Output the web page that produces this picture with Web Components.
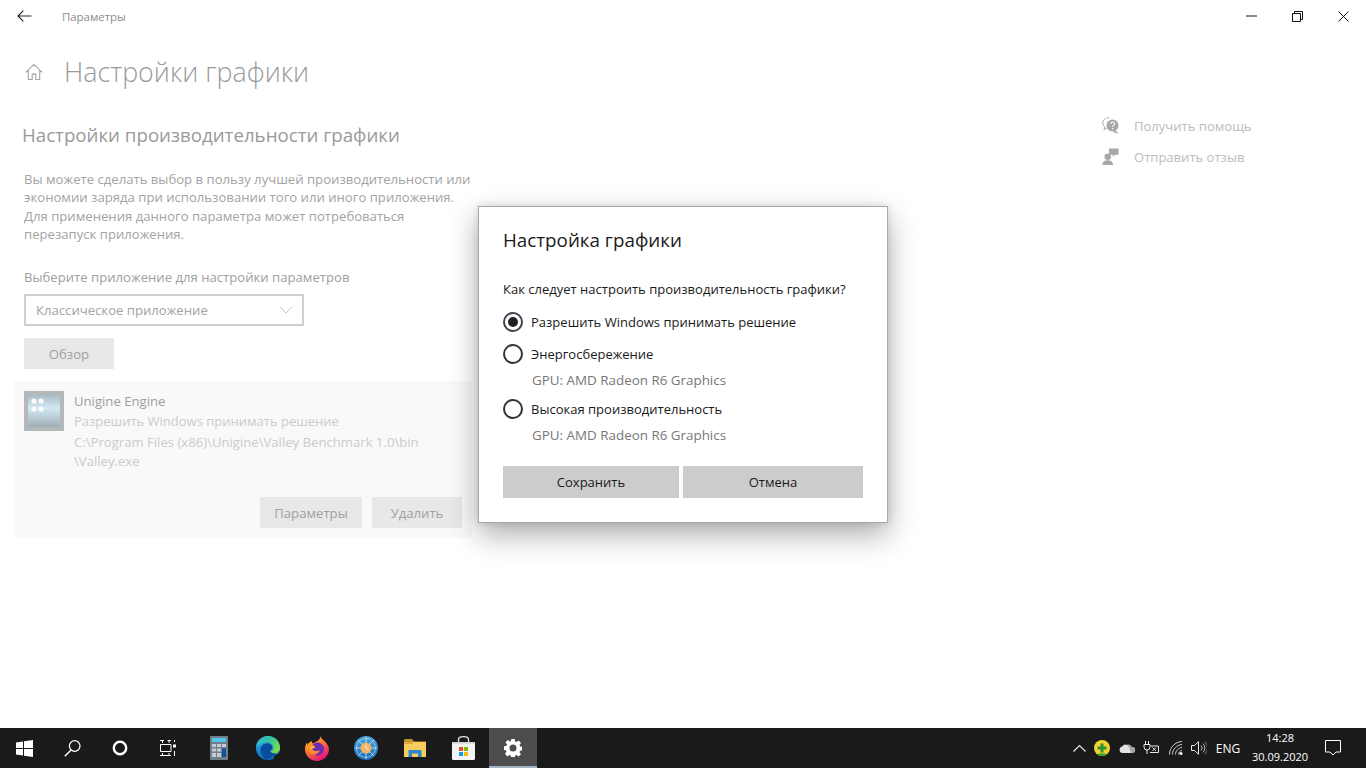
<!DOCTYPE html>
<html lang="ru">
<head>
<meta charset="utf-8">
<title>Настройки графики</title>
<style>
html, body { margin: 0; height: 100%; }
body {
    width: 1366px; height: 768px; overflow: hidden; background: #fff;
    font-family: "Open Sans", "Noto Sans", sans-serif; font-size: 13.13px;
    display: flex; flex-direction: column; position: relative;
}
settings-window { flex: 1; }
</style>
</head>
<body>
<settings-window>
    <graphics-page></graphics-page>
    <help-links slot="side"></help-links>
</settings-window>
<task-bar></task-bar>
<graphics-dialog>
    <radio-option checked label="Разрешить Windows принимать решение"></radio-option>
    <radio-option label="Энергосбережение" sub="GPU: AMD Radeon R6 Graphics"></radio-option>
    <radio-option label="Высокая производительность" sub="GPU: AMD Radeon R6 Graphics"></radio-option>
</graphics-dialog>

<script>
class SettingsWindow extends HTMLElement {
    constructor() {
        super()
        this.attachShadow({mode: "open"})
        this.shadowRoot.innerHTML = `
        <style>
        :host { display: flex; flex-direction: column; min-height: 0; }
        .title { height: 32px; display: flex; align-items: center; color: #8c8c8c; font-size: 11.4px; }
        .back { width: 62px; display: flex; padding-left: 17px; box-sizing: border-box; }
        .name { flex: 1; }
        .ctl { width: 46px; height: 32px; display: flex; align-items: center; justify-content: center; }
        svg { display: block; }
        .body { flex: 1; display: flex; justify-content: space-between; }
        </style>
        <div class="title">
            <div class="back"><svg width="15" height="12" viewBox="0 0 15 12" fill="none" stroke="#222" stroke-width="1.1"><path d="M14.5 6H1M6.3.7 1 6l5.3 5.3"/></svg></div>
            <div class="name">Параметры</div>
            <div class="ctl"><svg width="11" height="2" viewBox="0 0 11 2"><path d="M0 1h11" stroke="#111" stroke-width="1"/></svg></div>
            <div class="ctl"><svg width="11" height="11" viewBox="0 0 11 11" fill="none" stroke="#111"><path d="M.5 2.500h8v8h-8zM2.500 2.500v-2h8v8h-2"/></svg></div>
            <div class="ctl"><svg width="11" height="11" viewBox="0 0 11 11" fill="none" stroke="#111"><path d="m.5.5 10 10M10.500.5l-10 10"/></svg></div>
        </div>
        <div class="body"><slot></slot><slot name="side"></slot></div>`
    }
}

class GraphicsPage extends HTMLElement {
    constructor() {
        super()
        this.attachShadow({mode: "open"})
        this.shadowRoot.innerHTML = `
        <style>
        :host { display: block; width: 472px; padding-left: 14px; color: #a3a3a3; }
        .head { display: flex; align-items: center; height: 42px; margin-top: 18px; padding-left: 11px; }
        .head svg { display: block; margin-right: 21px; margin-top: 2px; }
        h1 { margin: 0; font-weight: 300; font-size: 26.8px; color: #9a9a9a; white-space: nowrap; }
        h2 { margin: 29px 0 0 8px; font-weight: 400; font-size: 18.7px; line-height: 28px; color: #9a9a9a; white-space: nowrap; }
        p { margin: 21px 0 0 10px; line-height: 18.3px; white-space: nowrap; }
        .lab { margin: 25px 0 0 10px; line-height: 18px; color: #a0a0a0; white-space: nowrap; }
        .sel {
            margin: 8px 0 0 10px; width: 280px; height: 32px; box-sizing: border-box; border: 2px solid #d0d0d0;
            display: flex; align-items: center; justify-content: space-between; padding: 0 9px 0 10px; color: #a3a3a3;
        }
        flat-button { margin: 12px 0 0 10px; }
        app-card { margin-top: 12px; }
        </style>
        <div class="head">
            <svg width="18" height="18" viewBox="0 0 18 18" fill="none" stroke="#a3a3a3" stroke-width="1.1"><path d="M.8 9.400 9 1.400l8.200 8M3.300 7.400v9.100h3.900v-5.400h3.600v5.400h3.900V7.400"/></svg>
            <h1>Настройки графики</h1>
        </div>
        <h2>Настройки производительности графики</h2>
        <p>Вы можете сделать выбор в пользу лучшей производительности или<br>экономии заряда при использовании того или иного приложения.<br>Для применения данного параметра может потребоваться<br>перезапуск приложения.</p>
        <div class="lab">Выберите приложение для настройки параметров</div>
        <div class="sel"><span>Классическое приложение</span><svg width="14" height="8" viewBox="0 0 14 8" fill="none" stroke="#c4c4c4"><path d="m.5.5 6.500 6.500L13.500.5"/></svg></div>
        <flat-button w="90">Обзор</flat-button>
        <app-card></app-card>`
    }
}

class FlatButton extends HTMLElement {
    constructor() {
        super()
        this.attachShadow({mode: "open"})
        const w = this.getAttribute("w") || "90"
        this.shadowRoot.innerHTML = `
        <style>
        :host { display: block; width: ${w}px; height: 31px; background: #e8e8e8; color: #a0a0a0; text-align: center; line-height: 32px; flex: none; }
        </style>
        <slot></slot>`
    }
}

class AppCard extends HTMLElement {
    constructor() {
        super()
        this.attachShadow({mode: "open"})
        this.shadowRoot.innerHTML = `
        <style>
        :host { display: block; width: 458px; height: 157px; box-sizing: border-box; background: #f9f9f9; padding: 10px; }
        .top { display: flex; gap: 10px; height: 106px; }
        .pic { width: 40px; height: 40px; flex: none; }
        .l { white-space: nowrap; line-height: 18.5px; }
        .a { color: #9d9d9d; margin-top: 1px; }
        .b { color: #cbcbcb; margin-top: 1px; font-size: 13px; }
        .c { color: #cbcbcb; margin-top: 3px; }
        .btns { display: flex; justify-content: flex-end; gap: 10px; }
        </style>
        <div class="top">
            <svg class="pic" viewBox="0 0 40 40">
                <defs><linearGradient id="g" x1="0" y1="0" x2="0" y2="1"><stop offset="0" stop-color="#a9bcc6"/><stop offset=".4" stop-color="#d3e8f2"/><stop offset=".75" stop-color="#b6c9d2"/><stop offset="1" stop-color="#9cabb1"/></linearGradient></defs>
                <rect width="40" height="40" fill="#b4b8ba"/><rect x="4" y="4" width="32" height="32" fill="url(#g)"/>
                <g fill="#fbfbfb"><circle cx="10" cy="10" r="2.600"/><circle cx="17" cy="10" r="2.600"/><circle cx="10" cy="18" r="2.600"/><circle cx="17" cy="18" r="2.600"/></g>
            </svg>
            <div>
                <div class="l a">Unigine Engine</div>
                <div class="l b">Разрешить Windows принимать решение</div>
                <div class="l c">C:\\Program Files (x86)\\Unigine\\Valley Benchmark 1.0\\bin<br>\\Valley.exe</div>
            </div>
        </div>
        <div class="btns"><flat-button w="102">Параметры</flat-button><flat-button w="90">Удалить</flat-button></div>`
    }
}

class HelpLinks extends HTMLElement {
    constructor() {
        super()
        this.attachShadow({mode: "open"})
        this.shadowRoot.innerHTML = `
        <style>
        :host { display: flex; flex-direction: column; gap: 12px; width: 264px; padding-top: 84px; color: #bcbcbc; font-size: 13.05px; }
        .r { display: flex; align-items: center; gap: 15px; height: 19px; white-space: nowrap; }
        svg { display: block; flex: none; }
        </style>
        <div class="r"><svg width="17" height="17" viewBox="0 0 17 17"><path d="M7 .8C3.400.8.700 3 .7 6c0 1.600.8 3 2.100 3.900L2 12.600l2.700-1.600" fill="none" stroke="#aaa"/><circle cx="10.500" cy="8.500" r="6" fill="#a8a8a8"/><path d="m13 13 3.500 3.500-5-1z" fill="#a8a8a8"/><path d="M8.700 7a1.900 1.900 0 1 1 2.600 1.700c-.6.3-.8.6-.8 1.100" fill="none" stroke="#fff" stroke-width="1.100"/><circle cx="10.500" cy="11.500" r=".7" fill="#fff"/></svg><span>Получить помощь</span></div>
        <div class="r"><svg width="17" height="17" viewBox="0 0 17 17" fill="#a8a8a8"><circle cx="5.700" cy="8.800" r="3.300"/><path d="M.4 17c0-3.300 2.100-4.800 5.300-4.800S11 13.700 11 17z"/><path d="M7 .6h9.600v6.200h-3.500l-2.300 1.900V6.800H7z"/></svg><span>Отправить отзыв</span></div>`
    }
}

class RadioOption extends HTMLElement {
    constructor() {
        super()
        this.attachShadow({mode: "open"})
        const checked = this.hasAttribute("checked")
        const sub = this.getAttribute("sub")
        this.shadowRoot.innerHTML = `
        <style>
        :host { display: block; color: #1a1a1a; }
        .r { display: flex; align-items: center; gap: 8px; height: 20px; white-space: nowrap; }
        .o { width: 20px; height: 20px; box-sizing: border-box; border: 2px solid #333; border-radius: 50%; display: flex; align-items: center; justify-content: center; flex: none; }
        .o.on { border-color: #3c4650; }
        .o.on::after { content: ""; width: 10px; height: 10px; border-radius: 50%; background: #222; }
        .s { margin: 7px 0 0 29px; line-height: 18px; color: #777; white-space: nowrap; font-size: 13.4px; }
        </style>
        <div class="r"><span class="o ${checked ? "on" : ""}"></span><span>${this.getAttribute("label")}</span></div>
        ${sub ? `<div class="s">${sub}</div>` : ""}`
    }
}

class GraphicsDialog extends HTMLElement {
    constructor() {
        super()
        this.attachShadow({mode: "open"})
        this.shadowRoot.innerHTML = `
        <style>
        :host {
            position: absolute; left: 478px; top: 206px; width: 410px; height: 317px; box-sizing: border-box;
            background: #fff; border: 1px solid #a8a8a8; box-shadow: 0 12px 28px rgba(0,0,0,.32), 0 0 8px rgba(0,0,0,.12);
            padding: 20px 24px 0; color: #1a1a1a; font-size: 13.03px;
        }
        h3 { margin: 0; font-weight: 400; font-size: 18.8px; line-height: 26px; white-space: nowrap; }
        .q { margin: 27px 0 0; line-height: 18px; white-space: nowrap; }
        .opts { display: flex; flex-direction: column; gap: 10px; margin-top: 14px; }
        ::slotted(radio-option:nth-child(2)) { margin-top: 2px; }
        .btns { display: flex; gap: 4px; margin-top: 22px; }
        .btn { height: 32px; line-height: 32px; text-align: center; background: #ccc; color: #1a1a1a; }
        </style>
        <h3>Настройка графики</h3>
        <div class="q">Как следует настроить производительность графики?</div>
        <div class="opts"><slot></slot></div>
        <div class="btns"><div class="btn" style="width:176px">Сохранить</div><div class="btn" style="width:180px">Отмена</div></div>`
    }
}

class TaskBar extends HTMLElement {
    constructor() {
        super()
        this.attachShadow({mode: "open"})
        this.shadowRoot.innerHTML = `
        <style>
        :host { display: flex; height: 40px; flex: none; background: #1a1a1a; color: #fff; font-size: 12px; }
        .i { height: 40px; display: flex; align-items: center; justify-content: center; flex: none; }
        .s { width: 48px; }
        .a { width: 49px; }
        .gap { width: 2px; }
        .on { background: #4d4d4d; box-shadow: inset 0 -2px 0 #a3b5c4; width: 48px; margin-left: 1px; }
        .sp { flex: 1; }
        .t { height: 40px; display: flex; align-items: center; justify-content: center; flex: none; }
        .clock { width: 72px; text-align: center; line-height: 19px; font-size: 11px; display: block; box-sizing: border-box; }
        svg { display: block; }
        </style>
        <div class="i s"><svg width="17" height="17" viewBox="0 0 17 17" fill="#fff"><path d="M0 2.500 7 1.500v6.500H0zM8 1.300 17 0v8H8zM0 9h7v6.500L0 14.500zM8 9h9v8L8 15.700z"/></svg></div>
        <div class="i s"><svg width="17" height="17" viewBox="0 0 17 17" fill="none" stroke="#fff" stroke-width="1.200"><circle cx="10.700" cy="6" r="5.300"/><path d="M7 10 .8 16.200" stroke-width="1.500"/></svg></div>
        <div class="i s"><svg width="16" height="16" viewBox="0 0 16 16" fill="none" stroke="#fff" stroke-width="2.400"><circle cx="8" cy="8" r="6.200"/></svg></div>
        <div class="i s"><svg width="16" height="16" viewBox="0 0 16 16" fill="none" stroke="#fff"><path d="M.5 4.500h10.500v7H.5zM0 .5h4M7.500.5H11M0 15.500h11M2.500 0v3M9 0v3M2.500 13v3M9 13v3M14.500 0v2M14.500 11v5" /><rect x="13" y="4.500" width="3" height="3" fill="#fff" stroke="none"/></svg></div>
        <div class="gap"></div>
        <div class="i a"><svg width="18" height="24" viewBox="0 0 18 24"><rect width="18" height="24" rx="1" fill="#6f7f8c"/><rect x="2" y="2" width="14" height="4" fill="#53c5ea"/><g fill="#c3ccd2"><rect x="2" y="8" width="4" height="3"/><rect x="7" y="8" width="4" height="3"/><rect x="12" y="8" width="4" height="3"/><rect x="2" y="12.500" width="4" height="3"/><rect x="7" y="12.500" width="4" height="3"/><rect x="2" y="17" width="4" height="4"/><rect x="7" y="17" width="4" height="4"/></g><rect x="12" y="12.500" width="4" height="8.500" fill="#164f97"/></svg></div>
        <div class="i a"><svg width="24" height="24" viewBox="0 0 24 24"><defs><linearGradient id="e1" x1="0" y1="0" x2="0" y2="1"><stop offset="0" stop-color="#2fb6e6"/><stop offset="1" stop-color="#0c6fc0"/></linearGradient><linearGradient id="e2" x1="0" y1="0" x2="1" y2=".6"><stop offset="0" stop-color="#2cb4dc"/><stop offset=".55" stop-color="#35c59a"/><stop offset="1" stop-color="#7ddc4a"/></linearGradient></defs><circle cx="12" cy="12" r="12" fill="url(#e1)"/><path d="M12 0C18.600 0 24 5 24 12c0 3.500-3 5.500-6 5.500-2 0-3.500-1-3.500-2 1.500-.5 3-1.700 3-3.500 0-3.500-3.500-6-6.500-6C6.500 6 3 8.500.2 10.500 1 4.500 6 0 12 0z" fill="url(#e2)"/><path d="M4.500 14c0-4 3-6.800 6.800-6.800 3 0 5 2 5 4.300 0 1.500-1 2.500-2.500 3 .2 2 3 3 5.500 2.500-2 3.500-5 6-8.500 6.800C7.500 22.500 4.500 18.500 4.500 14z" fill="#0a4d9c"/><path d="M18.500 18.700c2.500.2 4.500-1.200 5.500-3.200V24H17z" fill="#1a1a1a"/></svg></div>
        <div class="i a"><svg width="24" height="25" viewBox="0 0 24 25"><defs><linearGradient id="f1" x1="0" y1="0" x2=".6" y2="1"><stop offset="0" stop-color="#ffc93a"/><stop offset=".5" stop-color="#ff7a2b"/><stop offset="1" stop-color="#e5157c"/></linearGradient></defs><path d="M15.500 0c.5 3 3.500 4 5.500 6.500 2 2.600 3 5 3 6.500 0 6.500-5.300 12-12 12S0 19.500 0 13c0-2.500.8-5 2-6.500L2.600 9C3.500 7 5 5.500 7 5c-.5 1 0 2 .7 2.500C10.500 6 15 5 15.500 0z" fill="url(#f1)"/><circle cx="12.500" cy="13" r="6.500" fill="#6a2bb5"/><path d="M3.500 9.500C6 8 9 9 10 10.500l-3 2.500c1 2 5 3 8 1-1 3.500-5 5.500-8.500 4C3.500 16.500 2.500 13 3.500 9.500z" fill="#ff8a2a"/><path d="M4.500 10.500c2-1 5-.5 6 1-2 .5-4 1.500-4 2.500z" fill="#ffb63a"/></svg></div>
        <div class="i a"><svg width="24" height="24" viewBox="0 0 24 24"><defs><linearGradient id="m1" x1="0" y1="0" x2="0" y2="1"><stop offset="0" stop-color="#4ba6e0"/><stop offset="1" stop-color="#1c69b5"/></linearGradient></defs><circle cx="12" cy="12" r="12" fill="url(#m1)"/><circle cx="12" cy="12" r="9.500" fill="none" stroke="#9fd2f0" stroke-width=".8"/><path d="M12 1v22M1 12h22M4.200 4.200l15.600 15.600M19.800 4.200 4.200 19.800" stroke="#d8eefa" stroke-width=".8"/><circle cx="12" cy="12" r="5.500" fill="#f3b565"/><path d="M12 8.500v3.800l2.600 1" fill="none" stroke="#fff3dc" stroke-width="1"/></svg></div>
        <div class="i a"><svg width="22" height="18" viewBox="0 0 22 18"><path d="M0 1.500C0 .6.600 0 1.500 0H8l2 2.500H22V6H0z" fill="#c6932a"/><rect y="3" width="22" height="15" fill="#f6cc5a"/><rect y="3" width="9" height="2" fill="#e0a93a"/><path d="M4.500 18v-7h13v7H14v-3.500H8V18z" fill="#2a87d0"/></svg></div>
        <div class="i a"><svg width="23" height="24" viewBox="0 0 23 24"><path d="M6.500 6V3.500C6.500 1.500 8 .7 11.500.7s5 .8 5 2.800V6" fill="none" stroke="#e6e6e6" stroke-width="1.300"/><path d="M0 6h23v16.500a1.500 1.500 0 0 1-1.500 1.500h-20A1.500 1.500 0 0 1 0 22.500z" fill="#f4f4f4"/><path d="M0 6h23v1.500H0z" fill="#cfcfcf"/><rect x="7" y="11" width="4" height="4" fill="#f25022"/><rect x="12" y="11" width="4" height="4" fill="#7fba00"/><rect x="7" y="16" width="4" height="4" fill="#00a4ef"/><rect x="12" y="16" width="4" height="4" fill="#ffb900"/></svg></div>
        <div class="i on"><svg width="18" height="18" viewBox="0 0 18 18"><path fill="#fff" fill-rule="evenodd" d="M7.300 0h3.400l.4 2.500 1.500.6 2-1.500 2.400 2.400-1.500 2 .6 1.500 2.500.4v3.400l-2.500.4-.6 1.500 1.500 2-2.400 2.400-2-1.500-1.500.6-.4 2.500H7.300l-.4-2.500-1.500-.6-2 1.500L1 14.800l1.500-2-.6-1.500-2-.4V7.300l2.500-.4.600-1.500-1.500-2L3.900 1l2 1.500 1-.5zM9 5.500a3.500 3.500 0 1 0 0 7 3.500 3.500 0 0 0 0-7z"/></svg></div>
        <div class="sp"></div>
        <div class="t" style="width:14px;margin-right:8px"><svg width="13" height="8" viewBox="0 0 13 8" fill="none" stroke="#e8e8e8" stroke-width="1.200"><path d="m.5 7.500 6-6 6 6"/></svg></div>
        <div class="t" style="width:16px;margin-right:9px"><svg width="16" height="16" viewBox="0 0 16 16"><circle cx="8" cy="8" r="8" fill="#f2d22e"/><path d="M3 14a8 8 0 0 0 10 0c-1-1-3-.5-5-.5s-4-.5-5 .5z" fill="#2e9e3a"/><path d="M6.500 3.500h3v3h3v3h-3v3h-3v-3h-3v-3h3z" fill="#2e8f33"/></svg></div>
        <div class="t" style="width:16px;margin-right:8px"><svg width="16" height="10" viewBox="0 0 16 10"><path d="M6 2.500A4.500 4.500 0 0 1 13 4a3 3 0 0 1 1 6H9z" fill="#a6a6a6"/><path d="M3.500 10a3.300 3.300 0 0 1-.3-6.500A3.800 3.800 0 0 1 10 4l2 6z" fill="#e4e4e4"/></svg></div>
        <div class="t" style="width:16px;margin-right:9px"><svg width="16" height="14" viewBox="0 0 16 14" fill="none" stroke="#e8e8e8"><path d="M2.500 0v3M5.500 0v3M1 3.500h6V6a3 3 0 0 1-6 0zM4 9v4M8 5h7.500v6.500H7"/><path d="m9.500 6.500 3.500 3.500M13 6.500 9.500 10"/></svg></div>
        <div class="t" style="width:15px;margin-right:8px"><svg width="14" height="14" viewBox="0 0 14 14" fill="none" stroke="#cfcfcf"><path d="M.5 13.500C.5 6.500 6 .8 13 .5M3.500 13.500c0-5.200 4.300-9.700 9.500-10M6.500 13.500c0-3.500 2.800-6.700 6.500-7M9.500 13.500c0-2 1.500-3.700 3.500-4"/><circle cx="12" cy="12.500" r="1.500" fill="#fff" stroke="none"/></svg></div>
        <div class="t" style="width:16px;margin-right:6px"><svg width="16" height="14" viewBox="0 0 16 14" fill="none" stroke="#e8e8e8"><path d="M.5 4.500h3L7.500.7v12.600l-4-3.800h-3z"/><path d="M10 4.500a3.500 3.500 0 0 1 0 5M12 2.500a6.500 6.500 0 0 1 0 9" stroke="#bdbdbd"/><path d="M14 .8a9 9 0 0 1 0 12.400" stroke="#8a8a8a"/></svg></div>
        <div class="t" style="width:30px;font-size:12px;margin-right:1px">ENG</div>
        <div class="t clock">14:28<br>30.09.2020</div>
        <div class="t" style="width:20px;margin:0 23px 0 7px"><svg width="16" height="16" viewBox="0 0 16 16" fill="none" stroke="#fff"><path d="M.5.500h15v11.500h-4.500l-3 3-3-3H.5z"/></svg></div>`
    }
}

customElements.define("settings-window", SettingsWindow)
customElements.define("graphics-page", GraphicsPage)
customElements.define("flat-button", FlatButton)
customElements.define("app-card", AppCard)
customElements.define("help-links", HelpLinks)
customElements.define("radio-option", RadioOption)
customElements.define("graphics-dialog", GraphicsDialog)
customElements.define("task-bar", TaskBar)
</script>
</body>
</html>
